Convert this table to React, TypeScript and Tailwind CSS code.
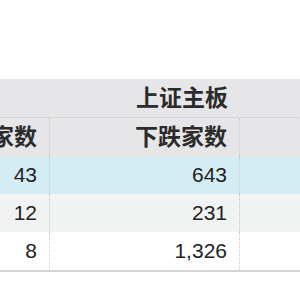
import React from "react";

const font = { fontFamily: '"Liberation Sans", "Noto Sans CJK SC", sans-serif' };

const rows = [
  { a: "43", b: "643", bg: "bg-[#d4edf4]" },
  { a: "12", b: "231", bg: "bg-[#f1f2f2]" },
  { a: "8", b: "1,326", bg: "bg-white" },
];

export default function App() {
  return (
    <div className="w-[300px] h-[300px] bg-white overflow-hidden" style={font}>
      <div className="mt-[79px] overflow-hidden">
        <div className="ml-[-101px] w-[520px] text-[21px] text-[#222]">
          <div className="flex h-[39px] bg-[#e6e6e9] border-b border-dotted border-[#c4c4c4]">
            <div className="w-[341px] flex items-center justify-end pr-3 font-bold text-[23px] text-[#2b2b2b]">上证主板</div>
            <div className="flex-1" />
          </div>
          <div className="flex h-[38px] bg-[#e6e6e9]">
            <div className="w-[151px] flex items-center justify-end pr-3 font-bold text-[23px] text-[#2b2b2b] border-r border-dotted border-[#c4c4c4]">上涨家数</div>
            <div className="w-[190px] flex items-center justify-end pr-3 font-bold text-[23px] text-[#2b2b2b] border-r border-dotted border-[#c4c4c4]">下跌家数</div>
            <div className="flex-1" />
          </div>
          {rows.map((r, i) => (
            <div key={i} className={`flex h-[38px] ${r.bg}`}>
              <div className="w-[151px] flex items-center justify-end pr-3 border-r border-dotted border-[#c4c4c4]">{r.a}</div>
              <div className="w-[190px] flex items-center justify-end pr-3 border-r border-dotted border-[#c4c4c4]">{r.b}</div>
              <div className="flex-1" />
            </div>
          ))}
          <div className="h-[2px] bg-[#d4d4d4]" />
        </div>
      </div>
    </div>
  );
}
